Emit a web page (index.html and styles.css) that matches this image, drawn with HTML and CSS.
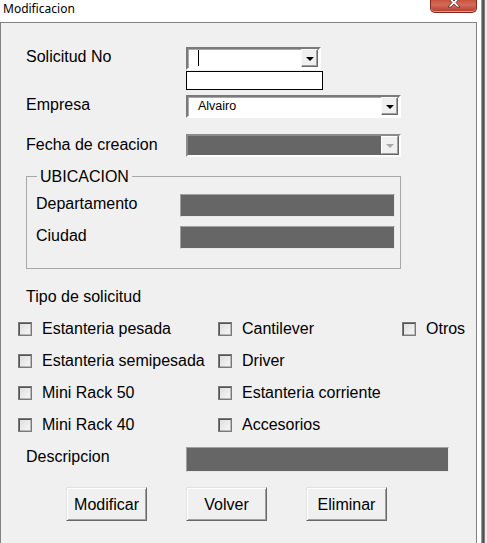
FILE: index.html
```html
<!DOCTYPE html>
<html lang="es">
<head>
<meta charset="utf-8">
<title>Modificacion</title>
<link rel="stylesheet" href="styles.css">
</head>
<body>
<div class="screen">
  <div class="window">
    <div class="titlebar">
      <span class="title">Modificacion</span>
      <div class="close">
        <svg class="close-x" width="16" height="14" viewBox="0 0 16 14">
          <path d="M2 0 L5 0 L8 3 L11 0 L14 0 L10 4.5 L14 9 L11 9 L8 6 L5 9 L2 9 L6 4.5 Z" fill="#ffffff" stroke="#5a2a22" stroke-width="0.8"/>
        </svg>
      </div>
    </div>
    <div class="panel">
      <div class="row">
        <span class="label">Solicitud No</span>
        <div class="stack">
          <div class="combo combo-short">
            <div class="combo-text"><span class="caret"></span></div>
            <div class="drop"><span class="arrow"></span></div>
          </div>
          <div class="textbox"></div>
        </div>
      </div>
      <div class="row row-empresa">
        <span class="label">Empresa</span>
        <div class="combo combo-wide">
          <div class="combo-text"><span class="value">Alvairo</span></div>
          <div class="drop"><span class="arrow"></span></div>
        </div>
      </div>
      <div class="row row-fecha">
        <span class="label label-fecha">Fecha de creacion</span>
        <div class="combo combo-wide combo-disabled">
          <div class="combo-text"></div>
          <div class="drop"><span class="arrow"></span></div>
        </div>
      </div>
      <div class="group">
        <span class="legend">UBICACION</span>
        <div class="group-row">
          <span class="label group-label">Departamento</span>
          <div class="field field-group"></div>
        </div>
        <div class="group-row">
          <span class="label group-label">Ciudad</span>
          <div class="field field-group"></div>
        </div>
      </div>
      <div class="section-title">Tipo de solicitud</div>
      <div class="checks">
        <label class="check"><span class="box"></span>Estanteria pesada</label>
        <label class="check"><span class="box"></span>Cantilever</label>
        <label class="check"><span class="box"></span>Otros</label>
        <label class="check"><span class="box"></span>Estanteria semipesada</label>
        <label class="check"><span class="box"></span>Driver</label>
        <span></span>
        <label class="check"><span class="box"></span>Mini Rack 50</label>
        <label class="check"><span class="box"></span>Estanteria corriente</label>
        <span></span>
        <label class="check"><span class="box"></span>Mini Rack 40</label>
        <label class="check"><span class="box"></span>Accesorios</label>
        <span></span>
      </div>
      <div class="row row-desc">
        <span class="label">Descripcion</span>
        <div class="field field-desc"></div>
      </div>
      <div class="buttons">
        <button class="btn" type="button">Modificar</button>
        <button class="btn" type="button">Volver</button>
        <button class="btn" type="button">Eliminar</button>
      </div>
    </div>
  </div>
  <div class="edge"></div>
  <div class="outside"></div>
</div>
</body>
</html>
```

FILE: styles.css
```css
* { box-sizing: border-box; }

html, body {
  margin: 0;
  padding: 0;
  background: #ffffff;
}

body {
  font-family: "Liberation Sans", Arial, sans-serif;
  font-size: 16px;
  color: #000000;
  overflow: hidden;
}

.screen {
  display: flex;
  height: 543px;
  overflow: hidden;
}

.window {
  width: 481px;
  flex: none;
  background: #ffffff;
  display: flex;
  flex-direction: column;
}

.edge {
  width: 4px;
  flex: none;
  background: linear-gradient(to right, #b4b4b4, #5a5a5a 40%, #4a4a4a 70%, #a8a8a8);
}

.outside {
  flex: 1;
  background: #e8e8e8;
}

.titlebar {
  height: 22px;
  flex: none;
  display: flex;
  justify-content: space-between;
  align-items: flex-start;
}

.title {
  font-family: "Noto Sans", "Open Sans", sans-serif;
  font-size: 12px;
  line-height: 16px;
  padding-left: 3px;
  padding-top: 1px;
  color: #000;
}

.close {
  width: 47px;
  height: 13px;
  margin-right: 4px;
  border: 1px solid #7e2a1f;
  border-top: none;
  border-radius: 0 0 5px 5px;
  background: linear-gradient(to bottom, #c9533f 0%, #d46a58 40%, #b53b2a 100%);
  box-shadow: inset 0 -1px 0 #e59483;
  display: flex;
  justify-content: center;
  overflow: hidden;
}

.close-x {
  margin-top: -2px;
}

.panel {
  flex: none;
  width: 477px;
  height: 540px;
  border: 1px solid #828282;
  background: #f0f0f0;
  padding: 24px 0 0 25px;
}

.row {
  display: flex;
  align-items: flex-start;
}

.label {
  width: 160px;
  line-height: 18px;
  padding-top: 1px;
  flex: none;
  white-space: nowrap;
}

.label-fecha {
  padding-top: 2px;
}

.row-empresa { margin-top: 5px; }
.row-fecha { margin-top: 16px; }

.stack {
  display: flex;
  flex-direction: column;
}

.combo {
  height: 23px;
  display: flex;
  border-style: solid;
  border-width: 2px;
  border-color: #7a7a7a #ffffff #ffffff #7a7a7a;
  box-shadow: inset 1px 1px 0 #a8a8a8;
  background: #ffffff;
  padding: 0 1px 1px 0;
}

.combo-short { width: 135px; }
.combo-wide { width: 215px; }

.combo-text {
  flex: 1;
  display: flex;
  align-items: center;
  padding-left: 10px;
}

.caret {
  width: 1px;
  height: 16px;
  background: #000;
}

.value {
  font-size: 12.5px;
  line-height: 15px;
  padding-top: 1px;
}

.drop {
  width: 17px;
  height: 100%;
  background: #f0f0f0;
  border-style: solid;
  border-width: 1px;
  border-color: #f8f8f8 #6a6a6a #6a6a6a #f8f8f8;
  box-shadow: inset -1px -1px 0 #a0a0a0;
  display: flex;
  align-items: center;
  justify-content: center;
}

.arrow {
  width: 0;
  height: 0;
  border-left: 4px solid transparent;
  border-right: 4px solid transparent;
  border-top: 4px solid #000;
  margin-top: 1px;
}

.combo-disabled {
  background: #666666;
  border-color: #8a8a8a #ffffff #ffffff #8a8a8a;
  box-shadow: none;
}

.combo-disabled .drop {
  border-color: #ffffff #a0a0a0 #a0a0a0 #ffffff;
  box-shadow: none;
}

.combo-disabled .arrow {
  border-top-color: #a8a8a8;
}

.textbox {
  margin-top: 1px;
  width: 137px;
  height: 19px;
  border: 1px solid #000000;
  background: #ffffff;
}

.group {
  position: relative;
  margin-top: 19px;
  width: 375px;
  border: 1px solid #a8a8a8;
  padding: 17px 0 19px 9px;
  display: flex;
  flex-direction: column;
  gap: 9px;
}

.legend {
  position: absolute;
  left: 10px;
  top: -9px;
  padding: 0 3px;
  line-height: 18px;
  background: #f0f0f0;
}

.group-row {
  display: flex;
  align-items: flex-start;
}

.group-label {
  width: 144px;
}

.field {
  height: 23px;
  background: #666666;
  border: 1px solid;
  border-color: #a0a0a0 #e8e8e8 #e8e8e8 #a0a0a0;
}

.field-group { width: 215px; }

.section-title {
  margin-top: 18px;
  padding-top: 1px;
  line-height: 18px;
}

.checks {
  margin-top: 6px;
  margin-left: -8px;
  display: grid;
  grid-template-columns: 200px 184px 1fr;
  grid-auto-rows: 32px;
}

.check {
  display: flex;
  align-items: center;
  white-space: nowrap;
  line-height: 18px;
  padding-top: 1px;
}

.box {
  width: 14px;
  height: 14px;
  margin-right: 10px;
  border: 1px solid #7a7a7a;
  box-shadow: inset 1px 1px 0 #555555, inset -1px -1px 0 #b8b8b8;
  background: linear-gradient(135deg, #dedede, #f8f8f8);
  flex: none;
}

.row-desc {
  margin-top: 7px;
}

.field-desc {
  width: 263px;
  height: 25px;
}

.buttons {
  margin-top: 15px;
  margin-left: 40px;
  display: flex;
  gap: 39px;
}

.btn {
  width: 81px;
  height: 34px;
  font-family: "Liberation Sans", Arial, sans-serif;
  font-size: 16px;
  color: #000;
  background: #f0f0f0;
  border-style: solid;
  border-width: 1px;
  border-color: #e3e3e3 #696969 #696969 #e3e3e3;
  box-shadow: inset 1px 1px 0 #ffffff, inset -1px -1px 0 #a0a0a0;
  padding: 2px 0 0 0;
  margin: 0;
}
```
